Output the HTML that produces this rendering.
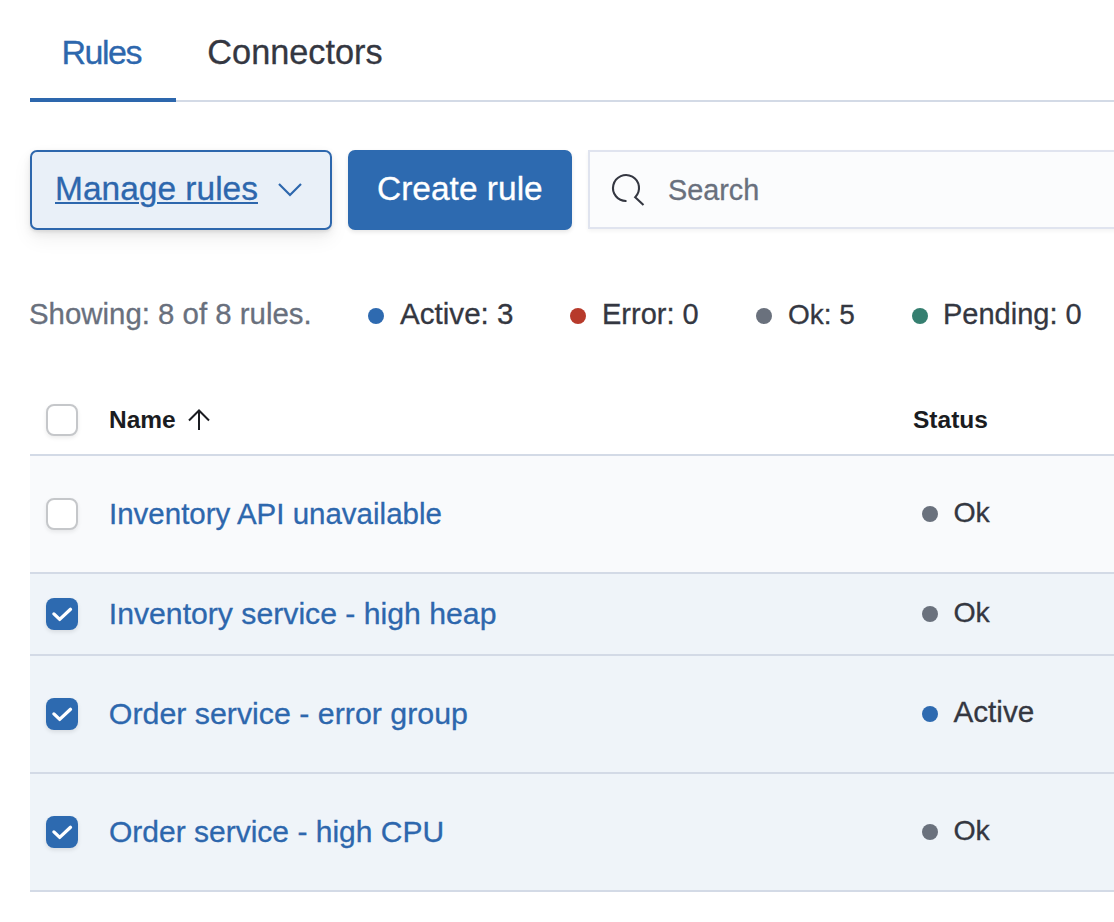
<!DOCTYPE html>
<html><head><meta charset="utf-8"><style>
html,body{margin:0;padding:0;background:#fff;width:1114px;height:922px;overflow:hidden;position:relative}
.t{position:absolute;line-height:1;white-space:pre;font-family:"Liberation Sans",sans-serif;-webkit-text-stroke:0.3px currentColor}
.r{position:absolute;box-sizing:content-box}
</style></head><body>
<div class="t" style="left:61.5px;top:35.21px;font-size:34px;color:#2d67ad;font-weight:400;letter-spacing:-1.5px;">Rules</div>
<div class="t" style="left:207.3px;top:34.96px;font-size:34.3px;color:#343741;font-weight:400;">Connectors</div>
<div class="r" style="left:30px;top:100px;width:1084px;height:2px;background:#d3dae6"></div>
<div class="r" style="left:30px;top:98px;width:146px;height:4px;background:#2d67ad"></div>
<div class="r" style="left:30px;top:150px;width:298px;height:76px;border:2px solid #2d67ad;border-radius:7px;background:#e9f0f8;box-shadow:0 1.4px 2.8px rgba(0,0,0,0.07),0 3.8px 8px rgba(0,0,0,0.06),0 9px 20px rgba(0,0,0,0.06)"></div>
<div class="t" style="left:55px;top:171.64px;font-size:33.5px;color:#2d67ad;font-weight:400;text-decoration:underline;text-decoration-thickness:2px;text-underline-offset:2px;">Manage rules</div>
<svg class="r" style="left:276px;top:180px" width="28" height="20" viewBox="0 0 28 20"><path d="M3 4 L14 15 L25 4" fill="none" stroke="#2d67ad" stroke-width="2.2"/></svg>
<div class="r" style="left:348px;top:150px;width:224px;height:80px;border-radius:7px;background:#2d6ab0;box-shadow:0 2px 4px rgba(0,0,0,0.10)"></div>
<div class="t" style="left:377px;top:171.64px;font-size:33.5px;color:#ffffff;font-weight:400;">Create rule</div>
<div class="r" style="left:588px;top:150px;width:600px;height:75px;border:2px solid #e0e4ef;background:#fbfcfd;box-shadow:0 2px 4px rgba(0,0,0,0.05)"></div>
<svg class="r" style="left:605px;top:165px" width="46" height="46" viewBox="0 0 46 46"><path d="M21.5 36 A13 13 0 1 1 30.2 32.2 L38.5 40" fill="none" stroke="#343741" stroke-width="2.1"/></svg>
<div class="t" style="left:668px;top:175.62px;font-size:28.8px;color:#69707d;font-weight:400;">Search</div>
<div class="t" style="left:29px;top:299.41px;font-size:29.4px;color:#69707d;font-weight:400;">Showing: 8 of 8 rules.</div>
<div class="r" style="left:368.0px;top:308.0px;width:16px;height:16px;border-radius:50%;background:#2e6ab0"></div>
<div class="t" style="left:400px;top:299.24px;font-size:29.6px;color:#343741;font-weight:400;">Active: 3</div>
<div class="r" style="left:570.0px;top:308.0px;width:16px;height:16px;border-radius:50%;background:#b73a2b"></div>
<div class="t" style="left:602px;top:299.75px;font-size:29px;color:#343741;font-weight:400;">Error: 0</div>
<div class="r" style="left:756.0px;top:308.0px;width:16px;height:16px;border-radius:50%;background:#6a717d"></div>
<div class="t" style="left:788px;top:300.59px;font-size:28px;color:#343741;font-weight:400;">Ok: 5</div>
<div class="r" style="left:912.0px;top:308.0px;width:16px;height:16px;border-radius:50%;background:#357f70"></div>
<div class="t" style="left:943px;top:299.75px;font-size:29px;color:#343741;font-weight:400;">Pending: 0</div>
<div class="r" style="left:46px;top:404px;width:28px;height:28px;border:2px solid #c5c7ca;border-radius:8px;background:#fff;box-shadow:0 2px 4px rgba(0,0,0,0.08)"></div>
<div class="t" style="left:109px;top:407.56px;font-size:24.5px;color:#1a1c21;font-weight:700;-webkit-text-stroke:0;">Name</div>
<svg class="r" style="left:186px;top:408px" width="26" height="24" viewBox="0 0 26 24"><path d="M13 22 L13 3 M3 12.5 L13 2.5 L23 12.5" fill="none" stroke="#1a1c21" stroke-width="2"/></svg>
<div class="t" style="left:913px;top:407.56px;font-size:24.5px;color:#1a1c21;font-weight:700;-webkit-text-stroke:0;">Status</div>
<div class="r" style="left:30px;top:454px;width:1084px;height:2px;background:#d3dae6"></div>
<div class="r" style="left:30px;top:456px;width:1084px;height:116px;background:#f9fafc"></div>
<div class="r" style="left:30px;top:572px;width:1084px;height:2px;background:#d3dae6"></div>
<div class="r" style="left:46px;top:498.0px;width:28px;height:28px;border:2px solid #c5c7ca;border-radius:8px;background:#fff;box-shadow:0 2px 4px rgba(0,0,0,0.08)"></div>
<div class="t" style="left:109px;top:499.42px;font-size:29.5px;color:#2d67ad;font-weight:400;">Inventory API unavailable</div>
<div class="r" style="left:922.0px;top:506.0px;width:16px;height:16px;border-radius:50%;background:#6a717d"></div>
<div class="t" style="left:953.4px;top:498.27px;font-size:28.5px;color:#343741;font-weight:400;">Ok</div>
<div class="r" style="left:30px;top:574px;width:1084px;height:80px;background:#eff4f9"></div>
<div class="r" style="left:30px;top:654px;width:1084px;height:2px;background:#d3dae6"></div>
<div class="r" style="left:46px;top:598.0px;width:32px;height:32px;border-radius:8px;background:#2d6ab0;box-shadow:0 2px 4px rgba(0,0,0,0.10)"></div><svg class="r" style="left:46px;top:598.0px" width="32" height="32" viewBox="0 0 32 32"><path d="M7.9 15.9 L13.7 21.4 L24.5 11.3" fill="none" stroke="#fff" stroke-width="3.3" stroke-linecap="round" stroke-linejoin="round"/></svg>
<div class="t" style="left:108.8px;top:598.83px;font-size:30.2px;color:#2d67ad;font-weight:400;">Inventory service - high heap</div>
<div class="r" style="left:922.0px;top:606.0px;width:16px;height:16px;border-radius:50%;background:#6a717d"></div>
<div class="t" style="left:953.4px;top:598.27px;font-size:28.5px;color:#343741;font-weight:400;">Ok</div>
<div class="r" style="left:30px;top:656px;width:1084px;height:116px;background:#eff4f9"></div>
<div class="r" style="left:30px;top:772px;width:1084px;height:2px;background:#d3dae6"></div>
<div class="r" style="left:46px;top:698.0px;width:32px;height:32px;border-radius:8px;background:#2d6ab0;box-shadow:0 2px 4px rgba(0,0,0,0.10)"></div><svg class="r" style="left:46px;top:698.0px" width="32" height="32" viewBox="0 0 32 32"><path d="M7.9 15.9 L13.7 21.4 L24.5 11.3" fill="none" stroke="#fff" stroke-width="3.3" stroke-linecap="round" stroke-linejoin="round"/></svg>
<div class="t" style="left:108.8px;top:698.70px;font-size:30.35px;color:#2d67ad;font-weight:400;">Order service - error group</div>
<div class="r" style="left:922.0px;top:706.0px;width:16px;height:16px;border-radius:50%;background:#2e6ab0"></div>
<div class="t" style="left:953.4px;top:697.25px;font-size:29.7px;color:#343741;font-weight:400;">Active</div>
<div class="r" style="left:30px;top:774px;width:1084px;height:116px;background:#eff4f9"></div>
<div class="r" style="left:30px;top:890px;width:1084px;height:2px;background:#d3dae6"></div>
<div class="r" style="left:46px;top:816.0px;width:32px;height:32px;border-radius:8px;background:#2d6ab0;box-shadow:0 2px 4px rgba(0,0,0,0.10)"></div><svg class="r" style="left:46px;top:816.0px" width="32" height="32" viewBox="0 0 32 32"><path d="M7.9 15.9 L13.7 21.4 L24.5 11.3" fill="none" stroke="#fff" stroke-width="3.3" stroke-linecap="round" stroke-linejoin="round"/></svg>
<div class="t" style="left:109px;top:817.00px;font-size:30px;color:#2d67ad;font-weight:400;">Order service - high CPU</div>
<div class="r" style="left:922.0px;top:824.0px;width:16px;height:16px;border-radius:50%;background:#6a717d"></div>
<div class="t" style="left:953.4px;top:816.27px;font-size:28.5px;color:#343741;font-weight:400;">Ok</div>
</body></html>
